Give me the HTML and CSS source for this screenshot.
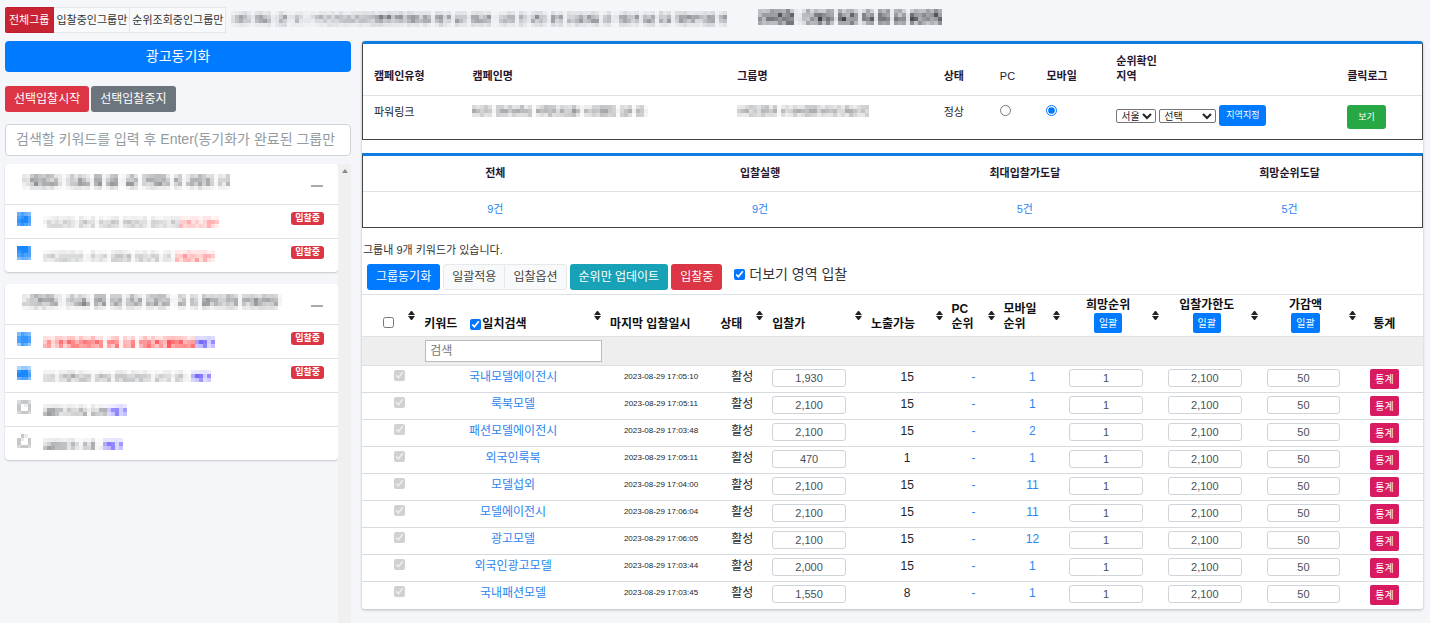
FILE: index.html
```html
<!DOCTYPE html>
<html lang="ko">
<head>
<meta charset="utf-8">
<title>광고 입찰 관리</title>
<link rel="stylesheet" href="styles.css">
</head>
<body>
<header class="topbar">
  <div class="btn-group">
    <button class="tab tab-active" type="button">전체그룹</button>
    <button class="tab" type="button">입찰중인그룹만</button>
    <button class="tab" type="button">순위조회중인그룹만</button>
  </div>
  <span class="mosaic notice" data-profile="2455304564035602430023444445444445456777777566655505645065605665600455505505664065605566656604500566560565065605666655666045" data-weights="2762"></span>
  <span class="mosaic period" data-profile="6767896990046789886078786067708680678087788998" data-weights="5896"></span>
</header>

<div class="layout">
  <aside class="sidebar">
    <button class="btn btn-primary btn-sync" type="button">광고동기화</button>
    <div class="bulk">
      <button class="btn btn-danger" type="button">선택입찰시작</button>
      <button class="btn btn-secondary" type="button">선택입찰중지</button>
    </div>
    <input class="search" type="text" aria-label="키워드 검색" placeholder="검색할 키워드를 입력 후 Enter(동기화가 완료된 그룹만 검색됩니다)">
    <div class="list">
      <div class="cards">
        <section class="card">
          <div class="card-head">
            <span class="mosaic" data-profile="3377777662045678507706790077605667776066045677650435" data-weights="4662"></span>
            <button class="collapse" type="button" aria-label="접기"></button>
          </div>
          <div class="item">
            <span class="mosaic check" data-grid="6765|7897|8997|7876" data-tone="blue"></span>
            <span class="mosaic name" data-profile="1344344304434043444045444504443344" data-weights="265"></span>
            <span class="mosaic name" data-profile="5544435543" data-weights="276" data-tone="red"></span>
            <span class="badge">입찰중</span>
          </div>
          <div class="item">
            <span class="mosaic check" data-grid="9997|8997|7877|5665" data-tone="blue"></span>
            <span class="mosaic name" data-profile="234345344300433404454504444440340" data-weights="265"></span>
            <span class="mosaic name" data-profile="5556565543" data-weights="276" data-tone="red"></span>
            <span class="badge">입찰중</span>
          </div>
        </section>
        <section class="card">
          <div class="card-head">
            <span class="mosaic" data-profile="33777776620456785067706790677605667760066045077656677605667776770" data-weights="4662"></span>
            <button class="collapse" type="button" aria-label="접기"></button>
          </div>
          <div class="item">
            <span class="mosaic check" data-grid="5765|7887|7887|4764" data-tone="blue"></span>
            <span class="mosaic name" data-profile="56367677778887606770677078878878877667" data-weights="387" data-tone="red"></span>
            <span class="mosaic name" data-profile="67655" data-weights="387" data-tone="violet"></span>
            <span class="badge">입찰중</span>
          </div>
          <div class="item">
            <span class="mosaic check" data-grid="3443|8996|9997|6775" data-tone="blue"></span>
            <span class="mosaic name" data-profile="3430445544440444404544544440434403400" data-weights="276"></span>
            <span class="mosaic name" data-profile="57655" data-weights="286" data-tone="violet"></span>
            <span class="badge">입찰중</span>
          </div>
          <div class="item">
            <span class="mosaic check" data-grid="2332|3013|3003|2332"></span>
            <span class="mosaic name" data-profile="4654434344504455" data-weights="277"></span>
            <span class="mosaic name" data-profile="46665" data-weights="277" data-tone="violet"></span>
          </div>
          <div class="item">
            <span class="mosaic check" data-grid="0310|3103|3003|2332"></span>
            <span class="mosaic name" data-profile="465444453044500" data-weights="277"></span>
            <span class="mosaic name" data-profile="67655" data-weights="277" data-tone="violet"></span>
          </div>
        </section>
      </div>
      <div class="track"><svg width="6" height="4" viewBox="0 0 6 4"><path d="M0 4L3 0L6 4Z" fill="#8b8b8b"/></svg></div>
    </div>
  </aside>

  <main class="panel">
    <table class="framed campaign">
      <colgroup><col class="c-type"><col class="c-name"><col class="c-group"><col class="c-state"><col class="c-pc"><col class="c-mobile"><col class="c-region"><col class="c-log"></colgroup>
      <thead>
        <tr><th>캠페인유형</th><th>캠페인명</th><th>그룹명</th><th>상태</th><th class="plain">PC</th><th>모바일</th><th>순위확인<br>지역</th><th>클릭로그</th></tr>
      </thead>
      <tbody>
        <tr>
          <td>파워링크</td>
          <td><span class="mosaic" data-profile="55554055655665606566655566504555666506650650" data-weights="474"></span></td>
          <td><span class="mosaic" data-profile="345554565504356666564555545665455" data-weights="474"></span></td>
          <td>정상</td>
          <td><input type="radio" name="device" aria-label="PC"></td>
          <td><input type="radio" name="device" aria-label="모바일" checked></td>
          <td><div class="region"><select class="city" aria-label="시도"><option>서울</option></select><select class="district" aria-label="지역"><option>선택</option></select><button class="btn btn-primary btn-tiny" type="button">지역지정</button></div></td>
          <td><button class="btn btn-success btn-view" type="button">보기</button></td>
        </tr>
      </tbody>
    </table>

    <table class="framed summary">
      <thead><tr><th>전체</th><th>입찰실행</th><th>최대입찰가도달</th><th>희망순위도달</th></tr></thead>
      <tbody><tr><td><a href="#all">9건</a></td><td><a href="#bidding">9건</a></td><td><a href="#max">5건</a></td><td><a href="#rank">5건</a></td></tr></tbody>
    </table>

    <p class="count">그룹내 9개 키워드가 있습니다.</p>
    <div class="toolbar">
      <button class="btn btn-primary" type="button">그룹동기화</button>
      <div class="btn-group">
        <button class="btn btn-light" type="button">일괄적용</button>
        <button class="btn btn-light" type="button">입찰옵션</button>
      </div>
      <button class="btn btn-info" type="button">순위만 업데이트</button>
      <button class="btn btn-danger" type="button">입찰중</button>
      <label class="more"><input type="checkbox" checked>더보기 영역 입찰</label>
    </div>

    <table class="keywords">
      <colgroup><col class="k-check"><col class="k-word"><col class="k-date"><col class="k-state"><col class="k-input"><col class="k-expose"><col class="k-pc"><col class="k-mobile"><col class="k-input"><col class="k-input"><col class="k-input"><col class="k-stat"></colgroup>
      <thead>
        <tr>
          <th class="pick sort"><input type="checkbox" aria-label="전체 선택"></th>
          <th class="sort"><div class="match"><span>키워드</span><label><input type="checkbox" checked>일치검색</label></div></th>
          <th>마지막 입찰일시</th>
          <th class="sort">상태</th>
          <th class="sort">입찰가</th>
          <th class="sort">노출가능</th>
          <th class="sort">PC<br>순위</th>
          <th class="sort">모바일<br>순위</th>
          <th class="sort batch">희망순위<br><button class="btn btn-primary btn-mini" type="button">일괄</button></th>
          <th class="sort batch">입찰가한도<br><button class="btn btn-primary btn-mini" type="button">일괄</button></th>
          <th class="sort batch">가감액<br><button class="btn btn-primary btn-mini" type="button">일괄</button></th>
          <th class="stat">통계</th>
        </tr>
        <tr class="filter"><td></td><td><input type="text" placeholder="검색" aria-label="키워드 필터"></td><td colspan="10"></td></tr>
      </thead>
      <tbody id="rows"></tbody>
    </table>
  </main>
</div>
<script src="app.js"></script>
</body>
</html>
```

FILE: styles.css
```css
* { box-sizing: border-box; }

body {
  margin: 0;
  min-height: 100vh;
  display: flex;
  flex-direction: column;
  background: #f4f6f9;
  color: #212529;
  font: 11px/15px "Liberation Sans", "Noto Sans CJK KR", sans-serif;
}

button, input, select { margin: 0; font-family: inherit; }
input[type="checkbox"], input[type="radio"] { width: 11px; height: 11px; flex: none; accent-color: #0075ff; }
a { color: #2b86f0; text-decoration: none; }

.mosaic { display: block; flex: none; }
.mosaic svg { display: block; }

/* Top bar */
.topbar { display: flex; align-items: flex-start; padding: 7px 5px 0; height: 41px; }
.btn-group { display: flex; }
.tab {
  height: 26px;
  padding: 0 2px 2px;
  border: 1px solid #e4e6e9;
  border-left-width: 0;
  background: #f8f9fa;
  color: #333;
  font-size: 11px;
  white-space: nowrap;
}
.tab-active { padding: 0 4px 2px; background: #c82333; border-color: #bd2130; color: #fff; border-radius: 2px 0 0 2px; }
.notice { margin: 4px 0 0 5px; }
.period { margin: 2px 0 0 31px; }

.layout {
  flex: 1;
  display: grid;
  grid-template-columns: minmax(0, 346fr) minmax(0, 1061fr);
  gap: 11px;
  padding: 0 7px 0 5px;
}

/* Buttons */
.btn {
  height: 26px;
  padding: 0 9px 3px;
  border: 0;
  border-radius: 3px;
  color: #fff;
  font-size: 12px;
  white-space: nowrap;
}
.btn-primary { background: #007bff; }
.btn-danger { background: #dc3545; }
.btn-secondary { background: #6c757d; }
.btn-success { background: #28a745; }
.btn-info { background: #17a2b8; }
.btn-light { background: #f8f9fa; color: #444; border: 1px solid #e6e8ea; padding: 0 8px 3px; }
.btn-group .btn-light:first-child { border-radius: 3px 0 0 3px; }
.btn-group .btn-light + .btn-light { border-left: 0; border-radius: 0 3px 3px 0; }
.btn-tiny { height: 21px; padding: 0 7px 2px; font-size: 9px; }
.btn-view { display: block; height: 24px; padding: 0 11px 1px; font-size: 9px; }
.btn-mini { height: 20px; padding: 0 5px 2px; border-radius: 2px; font-size: 10px; }
.btn-pink { display: block; height: 20px; padding: 0 5px 1px; border-radius: 2px; background: #d81b60; font-size: 10px; }

/* Sidebar */
.sidebar { display: flex; flex-direction: column; }
.btn-sync { height: 31px; font-size: 14px; border-radius: 4px; }
.bulk { display: flex; gap: 2px; margin: 14px 0 12px; }
.search {
  width: 100%;
  height: 32px;
  padding: 0 10px 2px;
  border: 1px solid #ced4da;
  border-radius: 4px;
  background: #fff;
  font-size: 14px;
}
.search::placeholder { color: #939ba2; }
.list { flex: 1; display: flex; margin-top: 8px; }
.cards { flex: 1; display: flex; flex-direction: column; gap: 12px; }
.card { background: #fff; border-radius: 4px; box-shadow: 0 1px 2px rgba(0, 0, 0, .2); }
.card-head { display: flex; justify-content: space-between; align-items: flex-start; height: 40px; padding: 10px 15px 0 17px; }
.collapse { width: 12px; height: 2px; margin-top: 11px; padding: 0; border: 0; background: #a5aab0; }
.item { display: flex; align-items: flex-start; height: 34px; padding: 7px 14px 0 12px; border-top: 1px solid #dfe1e4; }
.item .check { margin-right: 12px; }
.item .name { margin-top: 4px; }
.badge {
  margin-left: auto;
  padding: 0 4px 1px;
  border-radius: 3px;
  background: #dc3545;
  color: #fff;
  font-size: 9px;
  line-height: 12px;
  font-weight: 700;
}
.track { width: 13px; padding-top: 5px; background: #f0f0f1; display: flex; justify-content: center; align-items: flex-start; }

/* Main panel */
.panel { align-self: start; background: #fff; border-radius: 3px; box-shadow: 0 1px 3px rgba(0, 0, 0, .25); }
table { width: 100%; table-layout: fixed; border-collapse: separate; border-spacing: 0; }
th, td { padding: 0; text-align: left; }

.framed { border: 1px solid #444; border-top: 3px solid #0f7ce0; }
.framed th { border-bottom: 1px solid #dee2e6; color: #26162c; }
.framed th.plain { font-weight: 400; }
.campaign { border-radius: 3px 3px 0 0; }
.campaign th { height: 52px; padding: 0 0 11px 11px; vertical-align: bottom; }
.campaign td { height: 43px; padding: 9px 0 0 11px; vertical-align: top; }
.campaign input { display: block; }
.c-type { width: 9.3%; } .c-name { width: 25%; } .c-group { width: 19.5%; } .c-state { width: 5.3%; }
.c-pc { width: 4.4%; } .c-mobile { width: 6.6%; } .c-region { width: 21.8%; } .c-log { width: 8.1%; }
.region { display: flex; align-items: center; gap: 3px; }
.region select { height: 14px; padding: 0; border: 1px solid #767676; border-radius: 2px; background: #fff; color: #222; font-size: 10px; }
.city { width: 40px; }
.district { width: 57px; }

.summary { margin-top: 13px; }
.summary th, .summary td { height: 36px; text-align: center; }
.summary td { height: 35px; }

.count { margin: 0; padding: 15px 0 6px 1px; color: #333; }
.toolbar { display: flex; gap: 3px; padding: 0 5px 4px; }
.more { display: flex; align-items: center; gap: 4px; margin-left: 9px; font-size: 14px; height: 20px; color: #333; }

/* Keyword table */
.k-check { width: 5.3%; } .k-word { width: 17.5%; } .k-date { width: 10.4%; } .k-state { width: 4.9%; }
.k-input { width: 9.3%; } .k-expose { width: 7.6%; } .k-pc { width: 4.9%; } .k-mobile { width: 6.2%; } .k-stat { width: 6%; }
.keywords th {
  position: relative;
  height: 43px;
  padding: 0 0 4px 6px;
  border-top: 1px solid #dee2e6;
  border-bottom: 1px solid #dee2e6;
  color: #111;
  font-size: 12px;
  vertical-align: bottom;
  white-space: nowrap;
}
.keywords th.batch { padding: 0 15px 3px 6px; text-align: center; }
.keywords th.batch .btn { display: block; margin: 0 auto; }
.keywords th.pick { padding: 0 4px 4px 0; text-align: center; }
.keywords th.stat { padding-left: 14px; }
.arrows { position: absolute; top: 16px; right: 3px; }
.match { display: flex; gap: 13px; }
.match label { display: flex; align-items: center; gap: 1px; }

.filter td { height: 29px; padding: 0 2px 0 7px; background: #eee; border-bottom: 1px solid #dee2e6; }
.filter input { display: block; width: 100%; height: 22px; padding: 0 4px; border: 1px solid #bbb; background: #fff; font-size: 12px; }

.keywords tbody td { height: 27px; padding: 4px 3px 0 7px; border-bottom: 1px solid #d8dbde; font-size: 12px; text-align: center; vertical-align: top; white-space: nowrap; }
.keywords tbody tr:last-child td { border-bottom: 0; }
.keywords tbody td.pick { padding: 4px 0 0 18px; }
.keywords tbody td.pick input { display: block; margin: 0 auto; }
.keywords tbody td.date { padding-top: 3px; font-size: 8px; }
.keywords tbody td.field { padding: 3px 19px 0 6px; }
.keywords tbody td.stat { padding: 3px 0 0 11px; }
.field input { display: block; width: 100%; height: 18px; padding: 0; border: 1px solid #ced4da; border-radius: 3px; background: #fff; color: #495057; font-size: 11px; text-align: center; }
```

FILE: app.js
```js
const keywords = [
  ['국내모델에이전시', '17:05:10', '1,930', '15', '1'],
  ['룩북모델', '17:05:11', '2,100', '15', '1'],
  ['패션모델에이전시', '17:03:48', '2,100', '15', '2'],
  ['외국인룩북', '17:05:11', '470', '1', '1'],
  ['모델섭외', '17:04:00', '2,100', '15', '11'],
  ['모델에이전시', '17:06:04', '2,100', '15', '11'],
  ['광고모델', '17:06:05', '2,100', '15', '12'],
  ['외국인광고모델', '17:03:44', '2,000', '15', '1'],
  ['국내패션모델', '17:03:45', '1,550', '8', '1'],
];

const field = (label, value) =>
  `<td class="field"><input type="text" aria-label="${label}" value="${value}"></td>`;

document.getElementById('rows').innerHTML = keywords.map(([word, time, bid, expose, rank]) => `
  <tr>
    <td class="pick"><input type="checkbox" aria-label="${word} 선택" checked disabled></td>
    <td><a href="#keyword">${word}</a></td>
    <td class="date">2023-08-29 ${time}</td>
    <td>활성</td>
    ${field('입찰가', bid)}
    <td>${expose}</td>
    <td><a href="#pc">-</a></td>
    <td><a href="#mobile">${rank}</a></td>
    ${field('희망순위', '1')}${field('입찰가한도', '2,100')}${field('가감액', '50')}
    <td class="stat"><button class="btn btn-pink" type="button">통계</button></td>
  </tr>`).join('');

document.querySelectorAll('.sort').forEach((th) => {
  th.insertAdjacentHTML('beforeend',
    '<svg class="arrows" width="7" height="9" viewBox="0 0 7 9" fill="#222"><path d="M0 4L3 0H4L7 4ZM0 5L3 9H4L7 5Z"/></svg>');
});

// Masked names are drawn as a grid of tinted cells.
const tones = { gray: '#40444a', blue: '#007bff', red: '#ff3030', violet: '#4030ff' };
const CELL = 4;

function cellLevels(el) {
  if (el.dataset.grid) return el.dataset.grid.split('|').map((row) => [...row].map((d) => d / 10));
  let seed = 7;
  const noise = () => (seed = (seed * 1103515245 + 12345) % 2147483648) / 2147483648;
  return [...el.dataset.weights].map((w) =>
    [...el.dataset.profile].map((p) => (Math.max(p, 1) / 10) * (w / 10) * (0.5 + noise() * 0.9)));
}

document.querySelectorAll('.mosaic').forEach((el) => {
  const levels = cellLevels(el);
  const size = el.dataset.grid ? 3.5 : CELL;
  const width = Math.round(levels[0].length * size);
  const height = Math.round(levels.length * size);
  const color = tones[el.dataset.tone || 'gray'];
  const cells = levels.flatMap((row, y) => row.map((level, x) =>
    `<rect x="${x * size}" y="${y * size}" width="${size}" height="${size}" opacity="${level.toFixed(2)}"/>`));
  el.innerHTML = `<svg width="${width}" height="${height}" fill="${color}" shape-rendering="crispEdges" aria-hidden="true">${cells.join('')}</svg>`;
});
```
